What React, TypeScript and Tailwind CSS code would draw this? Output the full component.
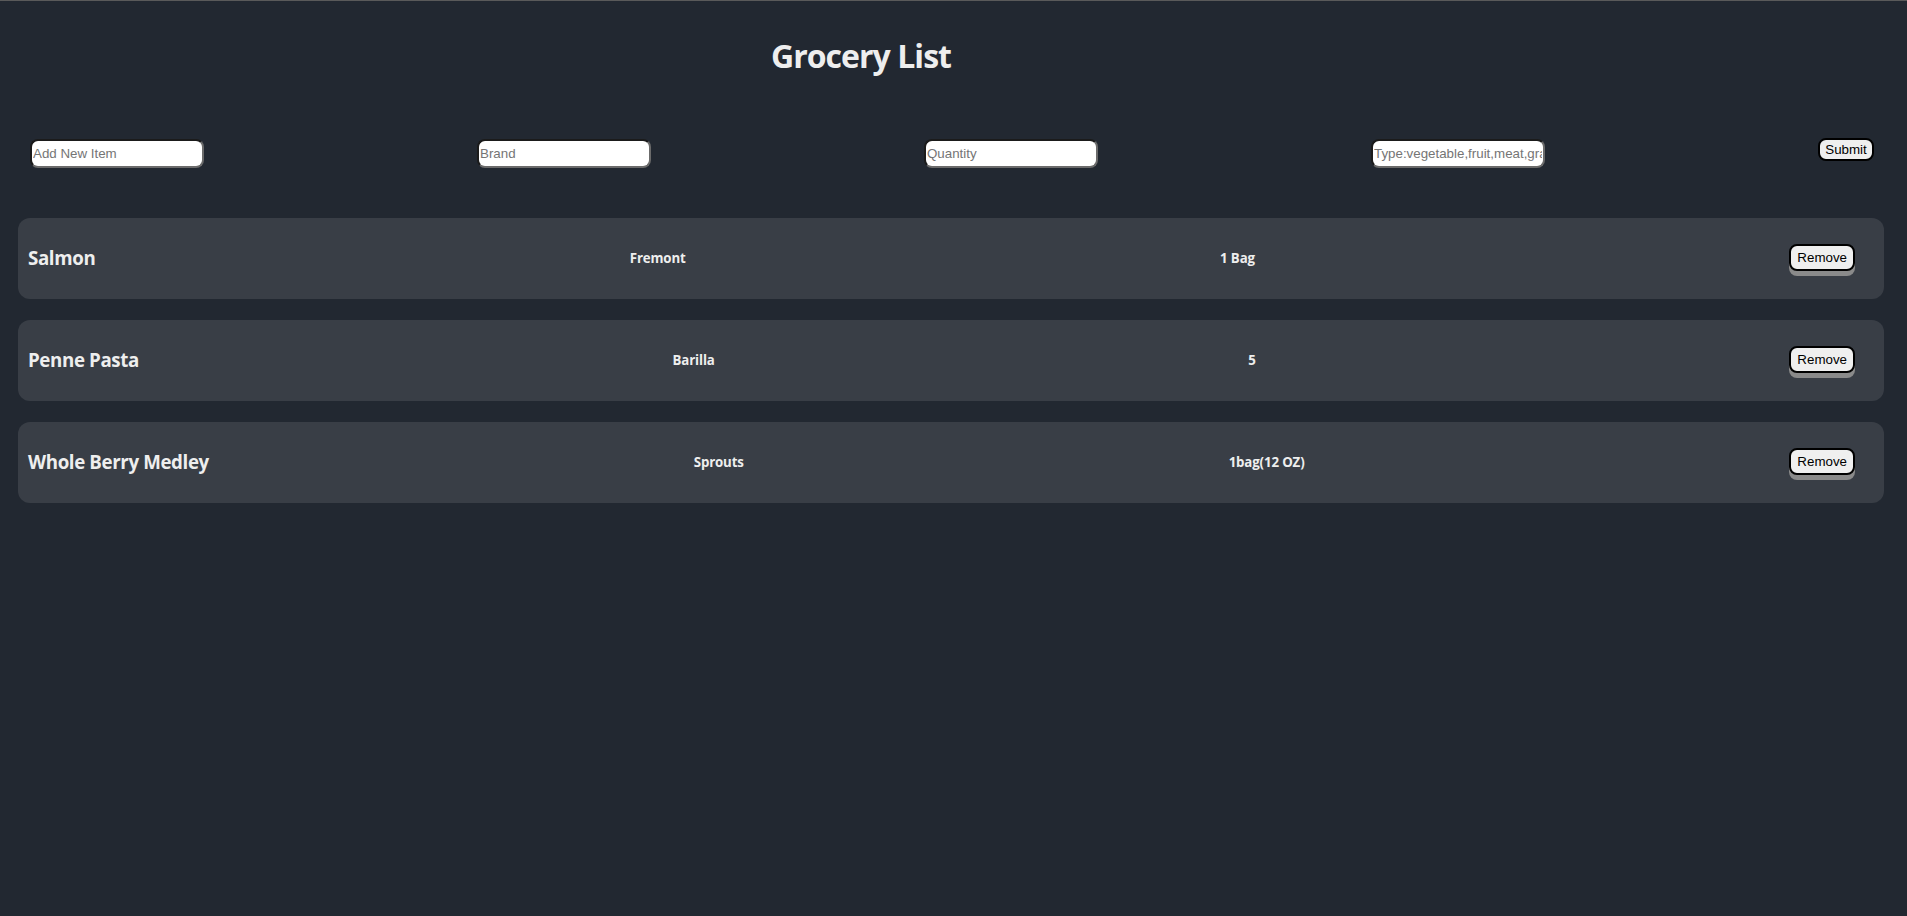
import React from "react";

interface GroceryItem {
  name: string;
  brand: string;
  quantity: string;
}

const items: GroceryItem[] = [
  { name: "Salmon", brand: "Fremont", quantity: "1 Bag" },
  { name: "Penne Pasta", brand: "Barilla", quantity: "5" },
  { name: "Whole Berry Medley", brand: "Sprouts", quantity: "1bag(12 OZ)" },
];

const inputClass =
  "w-[174px] h-[29px] rounded-lg border-2 border-t-[#1b1b1b] border-l-[#1b1b1b] border-b-[#6b6b6b] border-r-[#6b6b6b] bg-white px-[1px] font-['Liberation_Sans',Arial,sans-serif] text-[13.33px] text-black placeholder:text-[#757575] outline-none";

function ItemCard({ item }: { item: GroceryItem }) {
  return (
    <div className="ml-[18px] mr-[23px] mb-[21px] h-[81px] rounded-[12px] bg-[#393e46] pl-[10px] pr-[29px] flex items-center justify-between">
      <h3 className="text-[18.72px] font-bold tracking-[-0.02em] text-[#eeeeee]">{item.name}</h3>
      <h5 className="text-[13.28px] font-bold tracking-[-0.01em] text-[#eeeeee]">{item.brand}</h5>
      <h5 className="text-[13.28px] font-bold tracking-[-0.01em] text-[#eeeeee]">{item.quantity}</h5>
      <button className="mb-[2px] h-[27px] rounded-lg border-2 border-black bg-[#efefef] px-[6px] font-['Liberation_Sans',Arial,sans-serif] text-[13.33px] text-black shadow-[0_5px_0_#8a8a8a]">
        Remove
      </button>
    </div>
  );
}

export default function App() {
  return (
    <div className="min-h-screen bg-[#222831] border-t border-[#5a5a5a] font-['Open_Sans','Noto_Sans',sans-serif]">
      {/* Header */}
      <h1 className="pt-[33px] pr-[185px] text-center text-[32px] leading-[44px] font-bold tracking-[-0.03em] text-[#eeeeee]">
        Grocery List
      </h1>

      {/* Form */}
      <form
        className="mt-[61px] pl-[30px] pr-[33px] flex items-start justify-between"
        onSubmit={(e) => e.preventDefault()}
      >
        <input className={inputClass} placeholder="Add New Item" />
        <input className={inputClass} placeholder="Brand" />
        <input className={inputClass} placeholder="Quantity" />
        <input className={inputClass} placeholder="Type:vegetable,fruit,meat,grain" />
        <button
          type="submit"
          className="-mt-px h-[23px] w-[56px] rounded-lg border-2 border-black bg-[#efefef] font-['Liberation_Sans',Arial,sans-serif] text-[13.33px] text-black"
        >
          Submit
        </button>
      </form>

      {/* List */}
      <div className="mt-[50px]">
        {items.map((item) => (
          <ItemCard key={item.name} item={item} />
        ))}
      </div>
    </div>
  );
}
